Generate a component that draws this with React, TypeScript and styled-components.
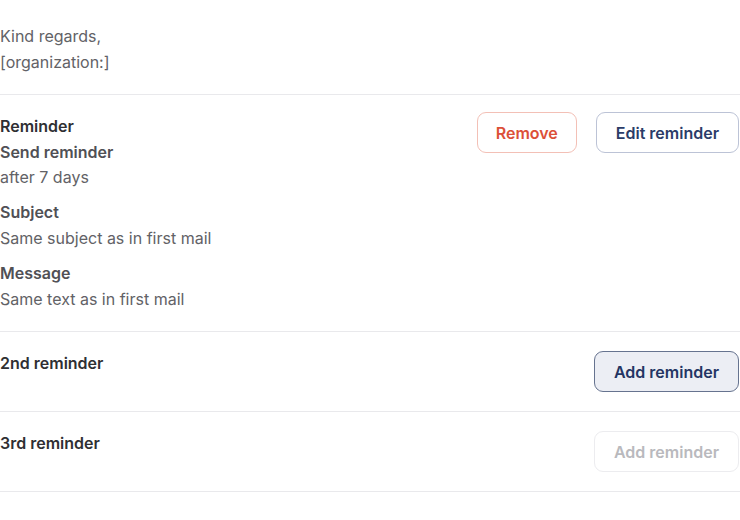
import React from "react";
import styled, { createGlobalStyle, css } from "styled-components";

const Global = createGlobalStyle`
  html, body { margin: 0; padding: 0; background: #ffffff; }
  body { font-family: Inter, "Noto Sans", sans-serif; -webkit-font-smoothing: antialiased; }
`;

const Page = styled.div`
  width: 739px;
  display: flex;
  flex-direction: column;
`;

const Section = styled.section<{ $tight?: boolean }>`
  display: flex;
  justify-content: space-between;
  align-items: flex-start;
  padding: ${(p) => (p.$tight ? "24px 0 19px" : "19px 0")};
  border-bottom: 1px solid #e9e9ec;
  margin-right: -1px;
  padding-right: 1px;
`;

const Block = styled.div`
  display: flex;
  flex-direction: column;
`;

const Group = styled.div`
  display: flex;
  flex-direction: column;
  & + & { margin-top: 9.5px; }
`;

const Heading = styled.div<{ $strong?: boolean }>`
  font-size: 16px;
  line-height: 25.6px;
  font-weight: 600;
  color: ${(p) => (p.$strong ? "#2f2f33" : "#505055")};
`;

const Text = styled.div`
  font-size: 16px;
  line-height: 25.6px;
  font-weight: 400;
  color: #626266;
`;

const Actions = styled.div`
  display: flex;
  gap: 19px;
  margin-top: -2px;
`;

type Variant = "danger" | "outline" | "active" | "disabled";

const variants: Record<Variant, ReturnType<typeof css>> = {
  danger: css`
    color: #dc5038;
    border-color: #f3c0b6;
    background: #ffffff;
    padding: 0 18px;
  `,
  outline: css`
    color: #2b3c68;
    border-color: #bcc3d6;
    background: #ffffff;
  `,
  active: css`
    color: #243563;
    border-color: #66738f;
    background: #eceef4;
  `,
  disabled: css`
    color: #b9b9bd;
    border-color: #ececef;
    background: #ffffff;
  `,
};

const Button = styled.button<{ $variant: Variant }>`
  height: 41px;
  padding: 0 19px;
  border: 1px solid;
  border-radius: 9px;
  font-family: Inter, "Noto Sans", sans-serif;
  font-size: 16px;
  font-weight: 600;
  cursor: ${(p) => (p.$variant === "disabled" ? "default" : "pointer")};
  ${(p) => variants[p.$variant]}
`;

export default function App() {
  return (
    <>
      <Global />
      <Page>
        <Section $tight>
          <Block>
            <Text>Kind regards,</Text>
            <Text>[organization:]</Text>
          </Block>
        </Section>
        <Section>
          <Block>
            <Group>
              <Heading $strong>Reminder</Heading>
              <Heading>Send reminder</Heading>
              <Text>after 7 days</Text>
            </Group>
            <Group>
              <Heading>Subject</Heading>
              <Text>Same subject as in first mail</Text>
            </Group>
            <Group>
              <Heading>Message</Heading>
              <Text>Same text as in first mail</Text>
            </Group>
          </Block>
          <Actions>
            <Button $variant="danger">Remove</Button>
            <Button $variant="outline">Edit reminder</Button>
          </Actions>
        </Section>
        <Section>
          <Heading $strong>2nd reminder</Heading>
          <Button $variant="active">Add reminder</Button>
        </Section>
        <Section>
          <Heading $strong>3rd reminder</Heading>
          <Button $variant="disabled" disabled>
            Add reminder
          </Button>
        </Section>
      </Page>
    </>
  );
}
